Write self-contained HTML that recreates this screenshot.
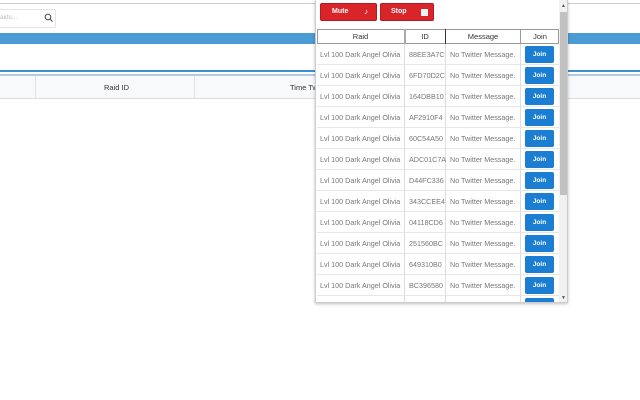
<!DOCTYPE html>
<html><head><style>
*{margin:0;padding:0;box-sizing:border-box}
body{width:640px;height:400px;overflow:hidden;background:#fff;font-family:"Liberation Sans",sans-serif;position:relative}
.a{position:absolute}
.cell{position:absolute;font-size:7.2px;color:#777;line-height:21px;white-space:nowrap}
.btn{position:absolute;left:209px;width:29px;height:17px;background:#1b7ed3;border-radius:2px;color:#fff;font-size:6.5px;font-weight:bold;text-align:center;line-height:17px}
.rb{position:absolute;top:3px;height:18px;background:#d9252a;border:1px solid #b51a1f;border-radius:2px;color:#fff;font-size:7px;font-weight:bold;line-height:16px}
</style></head><body>
<div class="a" style="left:0;top:3px;width:640px;height:1px;background:#ccc"></div>
<div class="a" style="left:-5px;top:9px;width:61px;height:19px;border:1px solid #e3e3e3;border-radius:2px"></div>
<div class="a" style="left:0;top:14px;font-size:6.5px;color:#bbb">aids...</div>
<svg class="a" style="left:44px;top:13px" width="10" height="10" viewBox="0 0 10 10"><circle cx="4" cy="4" r="2.8" fill="none" stroke="#555" stroke-width="1.1"/><path d="M6 6L8.5 8.5" stroke="#555" stroke-width="1.2"/></svg>
<div class="a" style="left:0;top:33px;width:640px;height:11px;background:#4b9bd5"></div>
<div class="a" style="left:0;top:70px;width:640px;height:2px;background:#3d8fd0"></div>
<div class="a" style="left:0;top:74px;width:640px;height:2px;background:#b6c8e6"></div>
<div class="a" style="left:0;top:76px;width:640px;height:23px;background:#f8f9fb;border-bottom:1px solid #ddd"></div>
<div class="a" style="left:35px;top:76px;width:1px;height:23px;background:#e2e2e2"></div>
<div class="a" style="left:194px;top:76px;width:1px;height:23px;background:#e2e2e2"></div>
<div class="a" style="left:104px;top:83px;font-size:7.5px;color:#333">Raid ID</div>
<div class="a" style="left:290px;top:83px;font-size:7.5px;color:#333">Time Tw</div>

<div class="a" style="left:315px;top:0;width:253px;height:303px;background:#fff;border:1px solid #ccc;border-top:none;box-shadow:0 1px 3px rgba(0,0,0,.25);overflow:hidden">
<div class="rb" style="left:4px;width:57px;"><span class="a" style="left:11px;top:0">Mute</span><span class="a" style="left:43px;top:0;font-size:8px">&#9834;</span></div>
<div class="rb" style="left:64px;width:54px;"><span class="a" style="left:10px;top:0">Stop</span><span class="a" style="left:40px;top:5px;width:7px;height:7px;background:#f4f4f4"></span></div>
<div class="a" style="left:1px;top:29px;width:242px;height:15px;border:1px solid #999;background:#fff"></div>
<div class="a" style="left:88px;top:29px;width:1px;height:274px;background:#ddd"></div>
<div class="a" style="left:129px;top:29px;width:1px;height:274px;background:#ddd"></div>
<div class="a" style="left:204px;top:29px;width:1px;height:274px;background:#ddd"></div>
<div class="a" style="left:88px;top:29px;width:2px;height:15px;background:#aaa"></div>
<div class="a" style="left:129px;top:29px;width:1px;height:15px;background:#333"></div>
<div class="a" style="left:204px;top:29px;width:1px;height:15px;background:#999"></div>
<div class="a" style="left:1px;top:29px;width:87px;font-size:7.5px;text-align:center;line-height:15px;color:#333">Raid</div>
<div class="a" style="left:89px;top:29px;width:40px;font-size:7.5px;text-align:center;line-height:15px;color:#333">ID</div>
<div class="a" style="left:130px;top:29px;width:74px;font-size:7.5px;text-align:center;line-height:15px;color:#333">Message</div>
<div class="a" style="left:205px;top:29px;width:38px;font-size:7.5px;text-align:center;line-height:15px;color:#333">Join</div>
<div id="rows"></div>
<div class="a" style="left:243px;top:0;width:9px;height:303px;background:#f1f1f1"></div>
<div class="a" style="left:244px;top:12px;width:7px;height:183px;background:#c1c1c1"></div>
<div class="a" style="left:245px;top:3px;font-size:5px;color:#555">&#9650;</div>
<div class="a" style="left:245px;top:295px;font-size:5px;color:#555">&#9660;</div>
</div>
<script>
var ids=["88EE3A7C","6FD70D2C","164DBB10","AF2910F4","60C54A50","ADC01C7A","D44FC336","343CCEE4","04118CD6","251560BC","649310B0","BC396580",""];
var h="";
for(var i=0;i<13;i++){var y=44+i*21;
h+='<div class="a" style="left:1px;top:'+(y+20)+'px;width:242px;height:1px;background:#e6e6e6"></div>';
if(i<12){h+='<div class="cell" style="left:4px;top:'+y+'px">Lvl 100 Dark Angel Olivia</div>';
h+='<div class="cell" style="left:93px;top:'+y+'px">'+ids[i]+'</div>';
h+='<div class="cell" style="left:134px;top:'+y+'px">No Twitter Message.</div>';}
h+='<div class="btn" style="top:'+(y+2)+'px">'+(i<12?'Join':'')+'</div>';}
document.getElementById('rows').innerHTML=h;
</script>
</body></html>
